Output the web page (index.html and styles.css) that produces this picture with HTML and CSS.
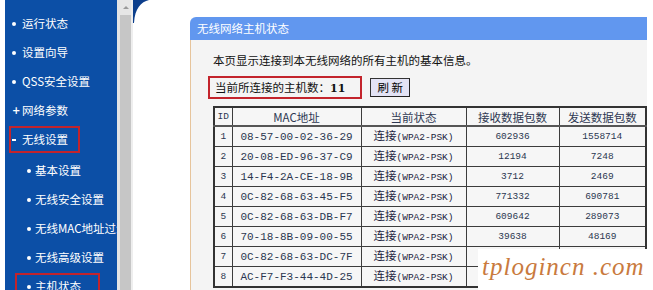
FILE: index.html
```html
<!DOCTYPE html>
<html lang="zh-CN">
<head>
  <meta charset="UTF-8" />
  <title>无线网络主机状态</title>
  <link rel="stylesheet" href="styles.css">
</head>
<body>

<div class="edge"></div>

<aside class="sidebar">
  <ul class="menu">
    <li class="item"><span class="label"><i class="dot"></i>运行状态</span></li>
    <li class="item"><span class="label"><i class="dot"></i>设置向导</span></li>
    <li class="item"><span class="label"><i class="dot"></i>QSS安全设置</span></li>
    <li class="item"><span class="label"><i class="plus">+</i>网络参数</span></li>
    <li class="item"><span class="label boxed"><i class="minus"></i>无线设置</span></li>
    <li class="item sub first"><span class="label"><i class="dot"></i>基本设置</span></li>
    <li class="item sub"><span class="label"><i class="dot"></i>无线安全设置</span></li>
    <li class="item sub"><span class="label"><i class="dot"></i>无线MAC地址过滤</span></li>
    <li class="item sub"><span class="label"><i class="dot"></i>无线高级设置</span></li>
    <li class="item sub"><span class="label boxed"><i class="dot"></i>主机状态</span></li>
  </ul>
</aside>

<div class="scrollbar">
  <div class="arrow"><span class="tri"></span></div>
  <div class="track"></div>
</div>

<main class="main">
  <svg class="corner" width="18" height="24" viewBox="0 0 18 24">
    <path d="M0 0 H16 C8 2 2 8 1 23 L0 23 Z" fill="#0d3f8c"/>
  </svg>

  <section class="panel">
    <div class="panel-title">无线网络主机状态</div>
    <div class="panel-body">
      <p class="desc">本页显示连接到本无线网络的所有主机的基本信息。</p>
      <div class="count-row">
        <span class="count">当前所连接的主机数：<b>11</b></span>
        <button class="refresh">刷 新</button>
      </div>
      <table class="hosts">
        <tr><th class="c-id">ID</th><th class="c-mac">MAC地址</th><th class="c-st">当前状态</th><th class="c-rx">接收数据包数</th><th class="c-tx">发送数据包数</th></tr>
        <tr><td>1</td><td class="mac">08-57-00-02-36-29</td><td>连接<span class="m">(WPA2-PSK)</span></td><td>602936</td><td>1558714</td></tr>
        <tr><td>2</td><td class="mac">20-08-ED-96-37-C9</td><td>连接<span class="m">(WPA2-PSK)</span></td><td>12194</td><td>7248</td></tr>
        <tr><td>3</td><td class="mac">14-F4-2A-CE-18-9B</td><td>连接<span class="m">(WPA2-PSK)</span></td><td>3712</td><td>2469</td></tr>
        <tr><td>4</td><td class="mac">0C-82-68-63-45-F5</td><td>连接<span class="m">(WPA2-PSK)</span></td><td>771332</td><td>690781</td></tr>
        <tr><td>5</td><td class="mac">0C-82-68-63-DB-F7</td><td>连接<span class="m">(WPA2-PSK)</span></td><td>609642</td><td>289073</td></tr>
        <tr><td>6</td><td class="mac">70-18-8B-09-00-55</td><td>连接<span class="m">(WPA2-PSK)</span></td><td>39638</td><td>48169</td></tr>
        <tr><td>7</td><td class="mac">0C-82-68-63-DC-7F</td><td>连接<span class="m">(WPA2-PSK)</span></td><td>70807</td><td>47402</td></tr>
        <tr><td>8</td><td class="mac">AC-F7-F3-44-4D-25</td><td>连接<span class="m">(WPA2-PSK)</span></td><td></td><td></td></tr>
      </table>
    </div>
  </section>

  <!-- watermark -->
  <div class="watermark">tplogincn .com</div>
</main>

</body>
</html>
```

FILE: styles.css
```css
* {
  margin: 0;
  padding: 0;
  box-sizing: border-box;
}

body {
  width: 653px;
  height: 290px;
  overflow: hidden;
  display: flex;
  background: #fff;
  font-family: 'Noto Sans CJK SC', 'DejaVu Sans', sans-serif;
  font-size: 11.5px;
  color: #111;
}

.edge {
  width: 5px;
  flex-shrink: 0;
  background: #fff;
}

/* left menu */
.sidebar {
  width: 112px;
  flex-shrink: 0;
  background: #0c4fa6;
  overflow: hidden;
  color: #fff;
}

.menu {
  list-style: none;
  padding-top: 9px;
}

.item {
  height: 29px;
  display: flex;
  align-items: center;
  padding-left: 4px;
  white-space: nowrap;
}

.item.sub {
  padding-left: 10px;
}

.item.first {
  margin-top: 2px;
}

.label {
  display: inline-flex;
  align-items: center;
  height: 27px;
  border: 2px solid transparent;
  padding: 0 10px 0 1px;
  line-height: 1;
}

.sub .label {
  padding-left: 10px;
}

.label.boxed {
  border-color: #c3242c;
}

.sub .label.boxed {
  padding-right: 17px;
}

.dot {
  width: 4px;
  height: 4px;
  border-radius: 50%;
  background: #fff;
  margin-right: 6px;
}

.sub .dot {
  margin-right: 4px;
}

.plus {
  font-style: normal;
  font-weight: bold;
  font-family: 'DejaVu Sans', sans-serif;
  font-size: 10px;
  width: 7px;
  margin-right: 3px;
}

.minus {
  width: 4px;
  height: 2px;
  background: #fff;
  margin-right: 6px;
}

/* scrollbar strip */
.scrollbar {
  width: 16px;
  flex-shrink: 0;
  display: flex;
  flex-direction: column;
  background: #c6c6c6;
  border-left: 3px solid #e4e4e4;
  border-right: 2px solid #eeeeee;
}

.arrow {
  height: 15px;
  background: #e6e6e6;
  display: flex;
  justify-content: center;
  align-items: center;
}

.tri {
  width: 0;
  height: 0;
  border-left: 3px solid transparent;
  border-right: 3px solid transparent;
  border-bottom: 3px solid #999;
}

.track {
  flex: 1;
}

/* main frame */
.main {
  flex: 1;
  position: relative;
  padding: 17px 0 0 57px;
  background: #fff;
}

.corner {
  position: absolute;
  top: 0;
  left: 0;
}

.panel {
  width: 457px;
  height: 273px;
  display: flex;
  flex-direction: column;
  overflow: hidden;
}

.panel-title {
  height: 23px;
  line-height: 23px;
  padding-left: 7px;
  background: #6197ef;
  color: #fff;
  border-radius: 6px 0 0 0;
}

.panel-body {
  flex: 1;
  background: #f4f4f4;
  border-left: 1px solid #e6c49c;
  padding: 10px 0 0 22px;
}

.desc {
  height: 20px;
  line-height: 20px;
}

.count-row {
  display: flex;
  align-items: center;
  gap: 8px;
  margin-top: 6px;
  margin-left: -5px;
}

.count {
  height: 23px;
  line-height: 19px;
  border: 2px solid #c3242c;
  padding: 0 15px 0 5px;
}

.count b {
  font-family: 'DejaVu Serif', serif;
  font-size: 11px;
}

.refresh {
  width: 40px;
  height: 19px;
  font-family: inherit;
  font-size: 11.5px;
  line-height: 15px;
  background: #e3e3f5;
  border: 1px solid #333;
  border-right-color: #222;
  border-bottom-color: #222;
  color: #000;
}

/* host table */
.hosts {
  margin-top: 7px;
  width: 432px;
  border-collapse: collapse;
  table-layout: fixed;
  border: 2px solid #333;
}

.hosts tr {
  height: 19px;
}

.hosts th,
.hosts td {
  border: 1px solid #3c3c3c;
  text-align: center;
  padding: 0;
  line-height: 16px;
  background: #f6f6f6;
  white-space: nowrap;
  overflow: hidden;
}

.hosts th {
  font-weight: normal;
  color: #2e3852;
  border-bottom: 2px solid #555;
}

.hosts td {
  font-family: 'Liberation Mono', monospace;
  font-size: 9.5px;
  color: #2b3650;
}

.hosts th.c-id {
  font-family: 'Liberation Mono', monospace;
  font-size: 9.5px;
}

.c-id { width: 18px; }
.c-mac { width: 129px; }
.c-st { width: 105px; }
.c-rx { width: 93px; }
.c-tx { width: 87px; }

.hosts td.mac {
  font-size: 11px;
}

.hosts td .m {
  font-size: 9.5px;
}

.hosts td:nth-child(3) {
  font-family: 'Noto Sans CJK SC', sans-serif;
  font-size: 11.5px;
  color: #1d2540;
}

.hosts td:nth-child(3) .m {
  font-family: 'Liberation Mono', monospace;
}

.watermark {
  position: absolute;
  left: 345px;
  top: 249px;
  width: 175px;
  height: 41px;
  background: #fff;
  padding-left: 4px;
  font-family: 'Liberation Serif', serif;
  font-style: italic;
  font-size: 25px;
  letter-spacing: 1px;
  line-height: 36px;
  color: #c97a3e;
  white-space: nowrap;
}
```
